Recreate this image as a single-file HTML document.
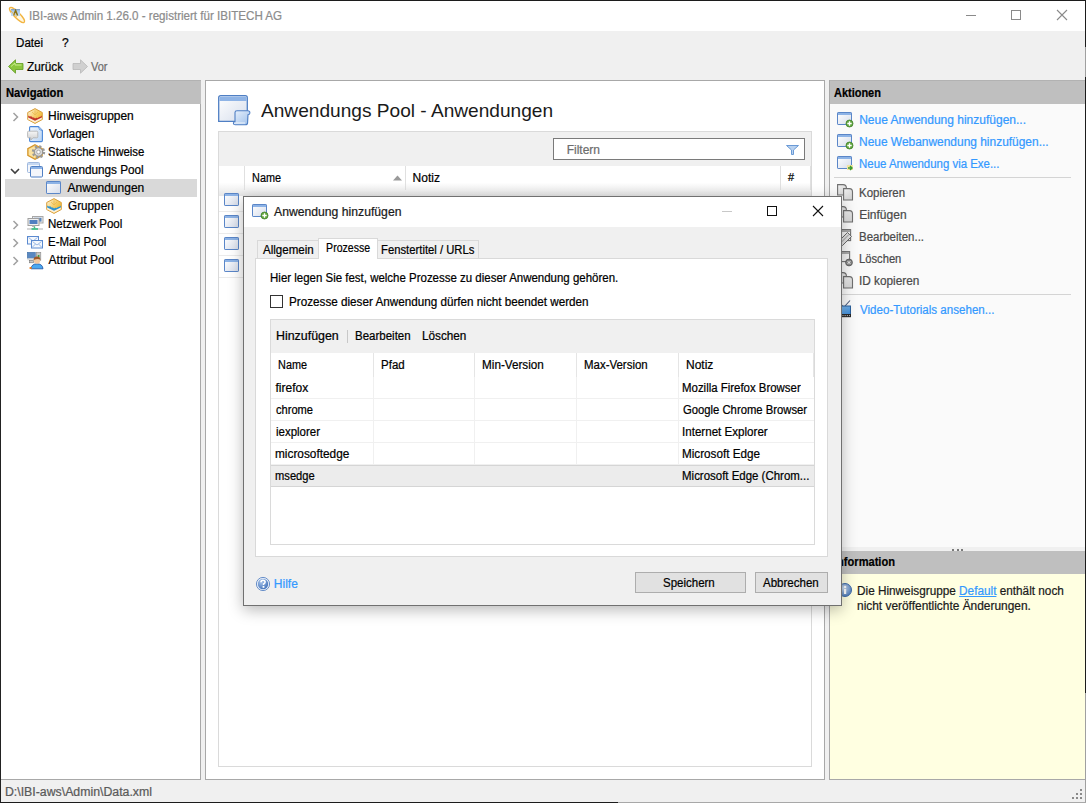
<!DOCTYPE html><html><head><meta charset="utf-8"><style>
html,body{margin:0;padding:0;}
body{width:1086px;height:803px;position:relative;overflow:hidden;background:#f0f0f0;font-family:"Liberation Sans",sans-serif;}
.t{position:absolute;white-space:nowrap;font-family:"Liberation Sans",sans-serif;-webkit-text-stroke:0.22px currentColor;}
svg{overflow:visible}
</style></head><body>
<div style="position:absolute;left:0px;top:0px;width:1086px;height:31px;background:#fff"></div>
<svg style="position:absolute;left:6px;top:4px" width="22" height="22" viewBox="0 0 22 22"><defs><linearGradient id="tg" x1="0" y1="0" x2="0" y2="1"><stop offset="0" stop-color="#7894b4"/><stop offset="0.25" stop-color="#a8c8ec"/><stop offset="1" stop-color="#c8e0fa"/></linearGradient></defs><ellipse cx="11" cy="11" rx="10.2" ry="2.9" transform="rotate(45 11 11)" fill="#fff6e0" stroke="#f2b440" stroke-width="1.3"/><rect x="5" y="5" width="9" height="7" fill="url(#tg)"/><path d="M7.6 11.5 L9.6 6.5 L11.6 11.5" fill="none" stroke="#8a7010" stroke-width="1.5"/><path d="M5 7.2 L10.5 12.7" stroke="#f2b440" stroke-width="1.3" stroke-dasharray="1 0.7"/></svg>
<div class="t" style="left:29.4px;top:10px;font-size:12px;line-height:12px;color:#8c8c8c;font-weight:400;transform:scaleX(0.9655);transform-origin:1px 0;">IBI-aws Admin 1.26.0 - registriert für IBITECH AG</div>
<div style="position:absolute;left:966px;top:15px;width:10px;height:1px;background:#8a8a8a"></div>
<div style="position:absolute;left:1011px;top:10px;width:10px;height:10px;border:1px solid #8a8a8a;box-sizing:border-box"></div>
<svg style="position:absolute;left:1057px;top:10px" width="10" height="10" viewBox="0 0 10 10"><path d="M0 0L10 10M10 0L0 10" stroke="#8a8a8a" stroke-width="1.1"/></svg>
<div class="t" style="left:15.600000000000001px;top:37px;font-size:12px;line-height:12px;color:#000;font-weight:400;transform:scaleX(0.9630);transform-origin:1px 0;">Datei</div>
<div class="t" style="left:62px;top:37px;font-size:12px;line-height:12px;color:#000;font-weight:400;">?</div>
<svg style="position:absolute;left:8px;top:59px" width="16" height="15" viewBox="0 0 16 15"><path d="M0.5 7.5 L7.5 0.8 V4.5 H15 V10.5 H7.5 V14.2 Z" fill="#8cc63f" stroke="#5f9a1e" stroke-width="0.8"/><path d="M3 7.5 L7 4 V6 H13.5" fill="none" stroke="#c8ec8a" stroke-width="1"/></svg>
<div class="t" style="left:27.3px;top:61px;font-size:12px;line-height:12px;color:#000;font-weight:400;transform:scaleX(0.9865);transform-origin:0px 0;">Zurück</div>
<svg style="position:absolute;left:72px;top:59px" width="16" height="15" viewBox="0 0 16 15"><path d="M15.5 7.5 L8.5 0.8 V4.5 H1 V10.5 H8.5 V14.2 Z" fill="#d0d0d0" stroke="#b8b8b8" stroke-width="0.8"/></svg>
<div class="t" style="left:91.2px;top:61px;font-size:12px;line-height:12px;color:#6d6d6d;font-weight:400;transform:scaleX(0.9167);transform-origin:0px 0;">Vor</div>
<div style="position:absolute;left:1px;top:80px;width:200px;height:24px;background:#bfbfbf;border-top:1px solid #b2b2b2;box-sizing:border-box"></div>
<div class="t" style="left:5.5px;top:87px;font-size:12px;line-height:12px;color:#000;font-weight:700;transform:scaleX(0.9344);transform-origin:0px 0;">Navigation</div>
<div style="position:absolute;left:1px;top:104px;width:199px;height:675px;background:#fff"></div>
<div style="position:absolute;left:200px;top:104px;width:1px;height:676px;background:#a8a8a8"></div>
<div style="position:absolute;left:1px;top:779px;width:200px;height:1px;background:#a8a8a8"></div>
<div style="position:absolute;left:5px;top:179px;width:192px;height:18px;background:#d9d9d9"></div>
<svg style="position:absolute;left:12px;top:112px" width="8" height="10" viewBox="0 0 8 10"><path d="M1.5 1 L5.5 5 L1.5 9" fill="none" stroke="#a0a0a0" stroke-width="1.5"/></svg>
<svg style="position:absolute;left:27px;top:108px" width="16" height="16" viewBox="0 0 16 16"><defs><linearGradient id="hxc2372a" x1="0" y1="0" x2="1" y2="0.6"><stop offset="0" stop-color="#fff4d8"/><stop offset="0.55" stop-color="#f6d070"/><stop offset="1" stop-color="#f0b830"/></linearGradient></defs><path d="M8 0.6 L15.3 4.5 V11.5 L8 15.4 L0.7 11.5 V4.5 Z" fill="url(#hxc2372a)" stroke="#d9a040" stroke-width="1"/><path d="M8 2.5 V7 M5 4 L8 7 L11 4" fill="none" stroke="#e8b850" stroke-width="0.7"/><path d="M1.2 9 L8 12.2 L14.8 9 V11.3 L8 14.8 L1.2 11.3 Z" fill="#fdf0d8"/><path d="M1.2 7.6 L2.8 8.6 L4.2 8.3 L5.6 9.6 L7 9.4 L8 10.4 L9.4 9.8 L10.8 10 L12 9 L13.4 8.8 L14.8 7.6 V9.6 L8 12.8 L1.2 9.6 Z" fill="#c2372a"/></svg>
<div class="t" style="left:47.6px;top:110px;font-size:12px;line-height:12px;color:#000;font-weight:400;transform:scaleX(0.9965);transform-origin:1px 0;">Hinweisgruppen</div>
<svg style="position:absolute;left:27px;top:126px" width="17" height="17" viewBox="0 0 17 17"><defs><linearGradient id="vg" x1="0" y1="0" x2="1" y2="1"><stop offset="0" stop-color="#f4f8fe"/><stop offset="1" stop-color="#b8d4f4"/></linearGradient><linearGradient id="vb" x1="0" y1="0" x2="0" y2="1"><stop offset="0" stop-color="#f6f6f6"/><stop offset="1" stop-color="#cfcfcf"/></linearGradient></defs><path d="M2.6 1.6 Q2.6 0.6 3.6 0.6 H11.5 L15.4 4.5 V14.6 Q15.4 15.6 14.4 15.6 H3.6 Q2.6 15.6 2.6 14.6 Z" fill="url(#vg)" stroke="#4a86d8" stroke-width="1.1"/><path d="M11.5 0.6 Q11.5 4.5 15.4 4.5" fill="#d8e8f8" stroke="#4a86d8" stroke-width="0.8"/><path d="M0.6 6.2 Q0.6 5.2 1.6 5.2 H9.8 Q10.8 5.2 10.8 6.2 V10.8 Q10.8 11.8 9.8 11.8 H6 L3.8 14 V11.8 H1.6 Q0.6 11.8 0.6 10.8 Z" fill="url(#vb)" stroke="#b4b4b4" stroke-width="0.9"/></svg>
<div class="t" style="left:48.6px;top:128px;font-size:12px;line-height:12px;color:#000;font-weight:400;transform:scaleX(0.9574);transform-origin:0px 0;">Vorlagen</div>
<svg style="position:absolute;left:27px;top:144px" width="17" height="16" viewBox="0 0 17 16"><path d="M8 0.8 L15.2 4.6 V11.4 L8 15.2 L0.8 11.4 V4.6 Z" fill="#f7d27a" stroke="#d4962e" stroke-width="1.2"/><path d="M8 2 L2 5 V11 L8 14 Z" fill="#fbe2a0"/><circle cx="11.5" cy="8" r="5.6" fill="none" stroke="#9a9a9a" stroke-width="2.2" stroke-dasharray="2.2 2.2"/><circle cx="11.5" cy="8" r="4.3" fill="#d8d8d8" stroke="#8a8a8a" stroke-width="1"/><circle cx="11.5" cy="8" r="1.8" fill="#fff" stroke="#9a9a9a" stroke-width="0.7"/></svg>
<div class="t" style="left:47.6px;top:146px;font-size:12px;line-height:12px;color:#000;font-weight:400;transform:scaleX(0.9500);transform-origin:1px 0;">Statische Hinweise</div>
<svg style="position:absolute;left:10px;top:168px" width="10" height="7" viewBox="0 0 10 7"><path d="M1 1 L5 5 L9 1" fill="none" stroke="#404040" stroke-width="1.6"/></svg>
<svg style="position:absolute;left:27px;top:162px" width="16" height="16" viewBox="0 0 16 16"><rect x="0.5" y="0.5" width="12" height="10" rx="1" fill="#f4f7fc" stroke="#9fb8de"/><rect x="1" y="1" width="11" height="2" fill="#c5d8f2"/><rect x="3.5" y="4.5" width="12" height="10.5" rx="1" fill="#f4f6fb" stroke="#4f7fc4"/><rect x="4" y="5" width="11" height="2" fill="#8db3e6"/></svg>
<div class="t" style="left:48.6px;top:164px;font-size:12px;line-height:12px;color:#000;font-weight:400;transform:scaleX(0.9792);transform-origin:0px 0;">Anwendungs Pool</div>
<svg style="position:absolute;left:46px;top:181px" width="18" height="17" viewBox="0 0 18 17"><defs><linearGradient id="wg46_181" x1="0" y1="0" x2="1" y2="1"><stop offset="0" stop-color="#ffffff"/><stop offset="1" stop-color="#d5dcea"/></linearGradient></defs><rect x="0.5" y="0.5" width="14" height="12" rx="0.6" fill="url(#wg46_181)" stroke="#5a86c8"/><rect x="1" y="1" width="13" height="2" fill="#8db3e6"/></svg>
<div class="t" style="left:67.5px;top:182px;font-size:12px;line-height:12px;color:#000;font-weight:400;transform:scaleX(1.0000);transform-origin:0px 0;">Anwendungen</div>
<svg style="position:absolute;left:46px;top:198px" width="16" height="16" viewBox="0 0 16 16"><defs><linearGradient id="hx2e93d1" x1="0" y1="0" x2="1" y2="0.6"><stop offset="0" stop-color="#fff4d8"/><stop offset="0.55" stop-color="#f6d070"/><stop offset="1" stop-color="#f0b830"/></linearGradient></defs><path d="M8 0.6 L15.3 4.5 V11.5 L8 15.4 L0.7 11.5 V4.5 Z" fill="url(#hx2e93d1)" stroke="#d9a040" stroke-width="1"/><path d="M8 2.5 V7 M5 4 L8 7 L11 4" fill="none" stroke="#e8b850" stroke-width="0.7"/><path d="M1.2 9 L8 12.2 L14.8 9 V11.3 L8 14.8 L1.2 11.3 Z" fill="#fdf0d8"/><path d="M1.2 7.6 L2.8 8.6 L4.2 8.3 L5.6 9.6 L7 9.4 L8 10.4 L9.4 9.8 L10.8 10 L12 9 L13.4 8.8 L14.8 7.6 V9.6 L8 12.8 L1.2 9.6 Z" fill="#2e93d1"/></svg>
<div class="t" style="left:67.5px;top:200px;font-size:12px;line-height:12px;color:#000;font-weight:400;transform:scaleX(0.9783);transform-origin:0px 0;">Gruppen</div>
<svg style="position:absolute;left:12px;top:220px" width="8" height="10" viewBox="0 0 8 10"><path d="M1.5 1 L5.5 5 L1.5 9" fill="none" stroke="#a0a0a0" stroke-width="1.5"/></svg>
<svg style="position:absolute;left:27px;top:216px" width="17" height="16" viewBox="0 0 17 16"><rect x="5.5" y="0.5" width="10.5" height="6.5" fill="#ececec" stroke="#a8a8a8"/><rect x="7" y="1.8" width="7.5" height="3.8" fill="#5a88c0"/><rect x="1" y="2.5" width="11" height="7" fill="#f0f0f0" stroke="#a0a0a0"/><rect x="2.5" y="4" width="8" height="4" fill="#4f7fc0"/><rect x="5" y="9.5" width="3" height="1.5" fill="#b8b8b8"/><path d="M0 13 H16" stroke="#cfcfcf" stroke-width="1.6"/><path d="M4.5 13 H11" stroke="#44c088" stroke-width="1.8"/><path d="M7.5 10.5 V13" stroke="#44c088" stroke-width="1.5"/></svg>
<div class="t" style="left:47.6px;top:218px;font-size:12px;line-height:12px;color:#000;font-weight:400;transform:scaleX(0.9605);transform-origin:1px 0;">Netzwerk Pool</div>
<svg style="position:absolute;left:12px;top:238px" width="8" height="10" viewBox="0 0 8 10"><path d="M1.5 1 L5.5 5 L1.5 9" fill="none" stroke="#a0a0a0" stroke-width="1.5"/></svg>
<svg style="position:absolute;left:27px;top:234px" width="17" height="16" viewBox="0 0 17 16"><rect x="0.5" y="2.5" width="11" height="7.5" fill="#f4f8fd" stroke="#5a8ad0"/><path d="M1.5 3.5 L6 7 L10.5 3.5" fill="none" stroke="#9ab8e4"/><rect x="4.5" y="6.5" width="11" height="7.5" fill="#f4f8fd" stroke="#5a8ad0"/><path d="M5.5 7.5 L10 11 L14.5 7.5 M5.5 13 L8.5 10 M14.5 13 L11.5 10" fill="none" stroke="#9ab8e4"/></svg>
<div class="t" style="left:47.6px;top:236px;font-size:12px;line-height:12px;color:#000;font-weight:400;transform:scaleX(0.9500);transform-origin:1px 0;">E-Mail Pool</div>
<svg style="position:absolute;left:12px;top:256px" width="8" height="10" viewBox="0 0 8 10"><path d="M1.5 1 L5.5 5 L1.5 9" fill="none" stroke="#a0a0a0" stroke-width="1.5"/></svg>
<svg style="position:absolute;left:27px;top:252px" width="17" height="17" viewBox="0 0 17 17"><rect x="0.3" y="0.3" width="8" height="6" fill="#5a88c0" stroke="#4070a8" stroke-width="0.6"/><rect x="0.3" y="6.3" width="8" height="2" fill="#dcdcdc"/><rect x="2.5" y="8.3" width="4" height="2.5" fill="#c8c8c8" stroke="#777" stroke-width="0.6"/><rect x="9.3" y="0.3" width="4.5" height="8" fill="#c8c8c8" stroke="#8a8a8a" stroke-width="0.6"/><rect x="10.8" y="3" width="1.6" height="2" fill="#40a040"/><path d="M4 16.8 Q4.5 11.8 10 11.8 Q15.5 11.8 16 16.8 Z" fill="#4aa8f0" stroke="#2050a0" stroke-width="0.8"/><circle cx="10" cy="8.6" r="3.2" fill="#f2c8a0"/><path d="M6.6 8 Q6.6 4.6 10 4.6 Q13.4 4.6 13.4 8 Q11.5 6.2 6.6 8 Z" fill="#a05a28"/><rect x="2.6" y="15" width="2" height="2" fill="#f08020"/></svg>
<div class="t" style="left:48.6px;top:254px;font-size:12px;line-height:12px;color:#000;font-weight:400;transform:scaleX(1.0000);transform-origin:0px 0;">Attribut Pool</div>
<div style="position:absolute;left:205px;top:80px;width:620px;height:700px;background:#fff;border:1px solid #a8a8a8;box-sizing:border-box"></div>
<svg style="position:absolute;left:218px;top:95px" width="33" height="31" viewBox="0 0 33 31"><defs><linearGradient id="bg1" x1="0" y1="0" x2="1" y2="1"><stop offset="0" stop-color="#fff"/><stop offset="1" stop-color="#d6deec"/></linearGradient><linearGradient id="bg2" x1="0" y1="0" x2="1" y2="1"><stop offset="0" stop-color="#e8f1fc"/><stop offset="1" stop-color="#9fc0ea"/></linearGradient></defs><path d="M0.7 2.7 Q0.7 0.7 2.7 0.7 H27.3 Q29.3 0.7 29.3 2.7 V26.3 H0.7 Z" fill="url(#bg1)" stroke="#4f7fc4" stroke-width="1.3"/><path d="M1.4 2.8 Q1.4 1.4 2.8 1.4 H27.2 Q28.6 1.4 28.6 2.8 V6 H1.4 Z" fill="#8fb4e6"/><path d="M17 17.5 Q17 15.7 19 15.7 H30 Q32.6 16.2 31.6 18.8 Q31 19.8 30 19.8 L29.6 27.6 Q29.5 29.8 27.4 29.8 H17.5 Q15 29.8 15.5 27.6 Q16.4 27 17 27 Z" fill="url(#bg2)" stroke="#4f7fc4" stroke-width="1.1"/><path d="M16 28 H27" stroke="#fff" stroke-width="0.8"/></svg>
<div class="t" style="left:261.4px;top:101px;font-size:19px;line-height:19px;color:#1a1a1a;font-weight:400;transform:scaleX(1.0055);transform-origin:0px 0;-webkit-text-stroke:0;">Anwendungs Pool - Anwendungen</div>
<div style="position:absolute;left:218px;top:131px;width:594px;height:636px;background:#fff;border:1px solid #dadada;box-sizing:border-box"></div>
<div style="position:absolute;left:219px;top:132px;width:592px;height:34px;background:#f0f0f0"></div>
<div style="position:absolute;left:553px;top:138px;width:252px;height:22px;background:#fff;border:1px solid #7a7a7a;box-sizing:border-box"></div>
<div class="t" style="left:566.7px;top:144px;font-size:12px;line-height:12px;color:#6d6d6d;font-weight:400;transform:scaleX(1.0000);transform-origin:1px 0;">Filtern</div>
<svg style="position:absolute;left:786px;top:145px" width="13" height="10" viewBox="0 0 13 10"><path d="M0.5 0.5 H12.5 L7.5 5 V9.5 H5.5 V5 Z" fill="#b9d2f0" stroke="#6a9ad6"/></svg>
<div style="position:absolute;left:219px;top:166px;width:592px;height:30px;background:linear-gradient(#fff 0%,#fff 55%,#e6e6e6 100%)"></div>
<div style="position:absolute;left:244px;top:166px;width:1px;height:24px;background:#e0e0e0"></div>
<div style="position:absolute;left:405px;top:166px;width:1px;height:24px;background:#e0e0e0"></div>
<div style="position:absolute;left:780px;top:166px;width:1px;height:24px;background:#e0e0e0"></div>
<div style="position:absolute;left:810px;top:166px;width:1px;height:24px;background:#e0e0e0"></div>
<div class="t" style="left:251.7px;top:172px;font-size:12px;line-height:12px;color:#000;font-weight:400;transform:scaleX(0.9032);transform-origin:1px 0;">Name</div>
<svg style="position:absolute;left:393px;top:175px" width="10" height="6" viewBox="0 0 10 6"><path d="M0 5.5 L4.5 0.5 L9 5.5 Z" fill="#9a9a9a"/></svg>
<div class="t" style="left:412.6px;top:172px;font-size:12px;line-height:12px;color:#000;font-weight:400;transform:scaleX(1.0000);transform-origin:1px 0;">Notiz</div>
<div class="t" style="left:788px;top:172px;font-size:11px;line-height:11px;color:#000;font-weight:400;">#</div>
<div style="position:absolute;left:219px;top:211px;width:25px;height:1px;background:#ebebeb"></div>
<svg style="position:absolute;left:224px;top:193px" width="18" height="17" viewBox="0 0 18 17"><defs><linearGradient id="wg224_193" x1="0" y1="0" x2="1" y2="1"><stop offset="0" stop-color="#ffffff"/><stop offset="1" stop-color="#d5dcea"/></linearGradient></defs><rect x="0.5" y="0.5" width="14" height="12" rx="0.6" fill="url(#wg224_193)" stroke="#5a86c8"/><rect x="1" y="1" width="13" height="2" fill="#8db3e6"/></svg>
<div style="position:absolute;left:219px;top:233px;width:25px;height:1px;background:#ebebeb"></div>
<svg style="position:absolute;left:224px;top:215px" width="18" height="17" viewBox="0 0 18 17"><defs><linearGradient id="wg224_215" x1="0" y1="0" x2="1" y2="1"><stop offset="0" stop-color="#ffffff"/><stop offset="1" stop-color="#d5dcea"/></linearGradient></defs><rect x="0.5" y="0.5" width="14" height="12" rx="0.6" fill="url(#wg224_215)" stroke="#5a86c8"/><rect x="1" y="1" width="13" height="2" fill="#8db3e6"/></svg>
<div style="position:absolute;left:219px;top:255px;width:25px;height:1px;background:#ebebeb"></div>
<svg style="position:absolute;left:224px;top:237px" width="18" height="17" viewBox="0 0 18 17"><defs><linearGradient id="wg224_237" x1="0" y1="0" x2="1" y2="1"><stop offset="0" stop-color="#ffffff"/><stop offset="1" stop-color="#d5dcea"/></linearGradient></defs><rect x="0.5" y="0.5" width="14" height="12" rx="0.6" fill="url(#wg224_237)" stroke="#5a86c8"/><rect x="1" y="1" width="13" height="2" fill="#8db3e6"/></svg>
<div style="position:absolute;left:219px;top:277px;width:25px;height:1px;background:#ebebeb"></div>
<svg style="position:absolute;left:224px;top:259px" width="18" height="17" viewBox="0 0 18 17"><defs><linearGradient id="wg224_259" x1="0" y1="0" x2="1" y2="1"><stop offset="0" stop-color="#ffffff"/><stop offset="1" stop-color="#d5dcea"/></linearGradient></defs><rect x="0.5" y="0.5" width="14" height="12" rx="0.6" fill="url(#wg224_259)" stroke="#5a86c8"/><rect x="1" y="1" width="13" height="2" fill="#8db3e6"/></svg>
<div style="position:absolute;left:829px;top:80px;width:1px;height:700px;background:#a8a8a8"></div>
<div style="position:absolute;left:830px;top:80px;width:255px;height:24px;background:#bfbfbf;border-top:1px solid #b2b2b2;box-sizing:border-box"></div>
<div class="t" style="left:833.7px;top:87px;font-size:12px;line-height:12px;color:#000;font-weight:700;transform:scaleX(0.9137);transform-origin:0px 0;">Aktionen</div>
<div style="position:absolute;left:830px;top:104px;width:255px;height:443px;background:#fafafa"></div>
<svg style="position:absolute;left:837px;top:112px" width="18" height="17" viewBox="0 0 18 17"><defs><linearGradient id="wg837_112" x1="0" y1="0" x2="1" y2="1"><stop offset="0" stop-color="#ffffff"/><stop offset="1" stop-color="#d5dcea"/></linearGradient></defs><rect x="0.5" y="0.5" width="14" height="12" rx="0.6" fill="url(#wg837_112)" stroke="#5a86c8"/><rect x="1" y="1" width="13" height="2" fill="#8db3e6"/><circle cx="12.5" cy="11.5" r="3.5" fill="#62a83e" stroke="#3f7f2a" stroke-width="0.8"/><path d="M12.5 9.3v4.4M10.3 11.5h4.4" stroke="#fff" stroke-width="1.3"/></svg>
<div class="t" style="left:859.2px;top:114px;font-size:12px;line-height:12px;color:#3399ff;font-weight:400;transform:scaleX(1.0000);transform-origin:1px 0;">Neue Anwendung hinzufügen...</div>
<svg style="position:absolute;left:837px;top:134px" width="18" height="17" viewBox="0 0 18 17"><defs><linearGradient id="wg837_134" x1="0" y1="0" x2="1" y2="1"><stop offset="0" stop-color="#ffffff"/><stop offset="1" stop-color="#d5dcea"/></linearGradient></defs><rect x="0.5" y="0.5" width="14" height="12" rx="0.6" fill="url(#wg837_134)" stroke="#5a86c8"/><rect x="1" y="1" width="13" height="2" fill="#8db3e6"/><circle cx="12.5" cy="11.5" r="3.5" fill="#62a83e" stroke="#3f7f2a" stroke-width="0.8"/><path d="M12.5 9.3v4.4M10.3 11.5h4.4" stroke="#fff" stroke-width="1.3"/></svg>
<div class="t" style="left:859.2px;top:136px;font-size:12px;line-height:12px;color:#3399ff;font-weight:400;transform:scaleX(0.9947);transform-origin:1px 0;">Neue Webanwendung hinzufügen...</div>
<svg style="position:absolute;left:837px;top:156px" width="18" height="17" viewBox="0 0 18 17"><defs><linearGradient id="wg837_156" x1="0" y1="0" x2="1" y2="1"><stop offset="0" stop-color="#ffffff"/><stop offset="1" stop-color="#d5dcea"/></linearGradient></defs><rect x="0.5" y="0.5" width="14" height="12" rx="0.6" fill="url(#wg837_156)" stroke="#5a86c8"/><rect x="1" y="1" width="13" height="2" fill="#8db3e6"/><rect x="10" y="9" width="6" height="5" fill="#f3e3a0"/><path d="M11 12h4m-2 -2l2 2l-2 2" stroke="#3a9a30" stroke-width="1.4" fill="none"/></svg>
<div class="t" style="left:859.2px;top:158px;font-size:12px;line-height:12px;color:#3399ff;font-weight:400;transform:scaleX(0.9521);transform-origin:1px 0;">Neue Anwendung via Exe...</div>
<div style="position:absolute;left:834px;top:177px;width:237px;height:1px;background:#d4d4d4"></div>
<svg style="position:absolute;left:837px;top:184px" width="17" height="17" viewBox="0 0 17 17"><defs><linearGradient id="pg" x1="0" y1="0" x2="1" y2="1"><stop offset="0" stop-color="#f2f2f2"/><stop offset="1" stop-color="#d0d0d0"/></linearGradient></defs><path d="M0.6 0.6 H6 Q9.4 0.6 9.4 4 V11 H0.6 Z" fill="url(#pg)" stroke="#707070" stroke-width="1.1"/><path d="M6.6 4.6 H12.5 Q15.5 4.6 15.5 8 V16 H6.6 Z" fill="url(#pg)" stroke="#707070" stroke-width="1.1"/></svg>
<div class="t" style="left:859.2px;top:187px;font-size:12px;line-height:12px;color:#4a4a4a;font-weight:400;transform:scaleX(0.9574);transform-origin:1px 0;">Kopieren</div>
<svg style="position:absolute;left:837px;top:206px" width="17" height="17" viewBox="0 0 17 17"><defs><linearGradient id="pg" x1="0" y1="0" x2="1" y2="1"><stop offset="0" stop-color="#f2f2f2"/><stop offset="1" stop-color="#d0d0d0"/></linearGradient></defs><path d="M0.6 0.6 H6 Q9.4 0.6 9.4 4 V11 H0.6 Z" fill="url(#pg)" stroke="#707070" stroke-width="1.1"/><path d="M6.6 4.6 H12.5 Q15.5 4.6 15.5 8 V16 H6.6 Z" fill="url(#pg)" stroke="#707070" stroke-width="1.1"/></svg>
<div class="t" style="left:859.2px;top:209px;font-size:12px;line-height:12px;color:#4a4a4a;font-weight:400;transform:scaleX(1.0000);transform-origin:1px 0;">Einfügen</div>
<svg style="position:absolute;left:837px;top:229px" width="17" height="17" viewBox="0 0 17 17"><rect x="0.6" y="0.6" width="13" height="11" fill="#f2f2f2" stroke="#707070" stroke-width="1.1"/><rect x="1" y="1" width="12.2" height="2" fill="#a8a8a8"/><path d="M1.5 12.5 L10.5 3.5 L14.5 7.5 L5.5 16.5 L1 17 Z" fill="#e0e0e0" stroke="#6a6a6a" stroke-width="1"/><path d="M3 14.5 L12 5.5" stroke="#9a9a9a" stroke-width="1"/></svg>
<div class="t" style="left:859.2px;top:231px;font-size:12px;line-height:12px;color:#4a4a4a;font-weight:400;transform:scaleX(0.9545);transform-origin:1px 0;">Bearbeiten...</div>
<svg style="position:absolute;left:837px;top:251px" width="17" height="17" viewBox="0 0 17 17"><rect x="0.6" y="0.6" width="12" height="10" fill="#f2f2f2" stroke="#707070" stroke-width="1.1"/><rect x="1" y="1" width="11.2" height="2" fill="#a8a8a8"/><circle cx="12" cy="11.5" r="3.4" fill="#8a8a8a" stroke="#5a5a5a" stroke-width="0.9"/><path d="M10.7 10.2l2.6 2.6m0-2.6l-2.6 2.6" stroke="#fff" stroke-width="1"/></svg>
<div class="t" style="left:859.2px;top:253px;font-size:12px;line-height:12px;color:#4a4a4a;font-weight:400;transform:scaleX(0.9318);transform-origin:1px 0;">Löschen</div>
<svg style="position:absolute;left:837px;top:272px" width="17" height="17" viewBox="0 0 17 17"><defs><linearGradient id="pg" x1="0" y1="0" x2="1" y2="1"><stop offset="0" stop-color="#f2f2f2"/><stop offset="1" stop-color="#d0d0d0"/></linearGradient></defs><path d="M0.6 0.6 H6 Q9.4 0.6 9.4 4 V11 H0.6 Z" fill="url(#pg)" stroke="#707070" stroke-width="1.1"/><path d="M6.6 4.6 H12.5 Q15.5 4.6 15.5 8 V16 H6.6 Z" fill="url(#pg)" stroke="#707070" stroke-width="1.1"/></svg>
<div class="t" style="left:859.2px;top:275px;font-size:12px;line-height:12px;color:#4a4a4a;font-weight:400;transform:scaleX(0.9833);transform-origin:1px 0;">ID kopieren</div>
<div style="position:absolute;left:834px;top:294px;width:237px;height:1px;background:#d4d4d4"></div>
<svg style="position:absolute;left:837px;top:300px" width="16" height="18" viewBox="0 0 16 18"><defs><linearGradient id="tvg" x1="0" y1="0" x2="1" y2="1"><stop offset="0" stop-color="#8cc4f4"/><stop offset="1" stop-color="#3a8ad8"/></linearGradient></defs><path d="M1 1.5 L5.5 6 M13 0.5 L8 6" stroke="#4a5a7a" stroke-width="1.1"/><rect x="0.5" y="6" width="13" height="8.5" fill="url(#tvg)" stroke="#2c5f9a"/><rect x="0" y="14" width="14" height="3.2" fill="#2a2a2a"/><path d="M1 15.6h12" stroke="#c8c8c8" stroke-width="0.9" stroke-dasharray="1.2 1"/></svg>
<div class="t" style="left:860.2px;top:304px;font-size:12px;line-height:12px;color:#3399ff;font-weight:400;transform:scaleX(0.9640);transform-origin:0px 0;">Video-Tutorials ansehen...</div>
<div style="position:absolute;left:830px;top:547px;width:255px;height:4px;background:#f0f0f0"></div>
<div style="position:absolute;left:952px;top:549px;width:2px;height:2px;background:#7a7a7a"></div>
<div style="position:absolute;left:957px;top:549px;width:2px;height:2px;background:#7a7a7a"></div>
<div style="position:absolute;left:961px;top:549px;width:2px;height:2px;background:#7a7a7a"></div>
<div style="position:absolute;left:830px;top:551px;width:255px;height:23px;background:#bfbfbf"></div>
<div class="t" style="left:833.7px;top:556px;font-size:12px;line-height:12px;color:#000;font-weight:700;transform:scaleX(0.9242);transform-origin:0px 0;">Information</div>
<div style="position:absolute;left:830px;top:574px;width:255px;height:205px;background:#ffffe1"></div>
<div style="position:absolute;left:829px;top:779px;width:256px;height:1px;background:#a8a8a8"></div>
<svg style="position:absolute;left:838px;top:583px" width="14" height="14" viewBox="0 0 14 14"><defs><radialGradient id="ig" cx="0.4" cy="0.35" r="0.7"><stop offset="0" stop-color="#c8daf0"/><stop offset="1" stop-color="#4a78b8"/></radialGradient></defs><circle cx="7" cy="7" r="6.5" fill="url(#ig)" stroke="#3f6aa8"/><rect x="6" y="6" width="2.2" height="5" fill="#fff"/><circle cx="7.1" cy="4" r="1.2" fill="#fff"/></svg>
<div class="t" style="left:857px;top:585px;font-size:12px;line-height:12px;color:#1a1a1a;font-weight:400;transform:scaleX(0.9810);transform-origin:1px 0;">Die Hinweisgruppe <span style="color:#3399ff;text-decoration:underline">Default</span> enthält noch</div>
<div class="t" style="left:857px;top:600px;font-size:12px;line-height:12px;color:#1a1a1a;font-weight:400;transform:scaleX(0.9920);transform-origin:1px 0;">nicht veröffentlichte Änderungen.</div>
<div style="position:absolute;left:1px;top:780px;width:1084px;height:22px;background:#f0f0f0"></div>
<div class="t" style="left:4.8px;top:786px;font-size:12px;line-height:12px;color:#5a5a5a;font-weight:400;transform:scaleX(1.0254);transform-origin:1px 0;">D:\IBI-aws\Admin\Data.xml</div>
<div style="position:absolute;left:1080px;top:789px;width:2px;height:2px;background:#8a8a8a"></div>
<div style="position:absolute;left:1076px;top:793px;width:2px;height:2px;background:#8a8a8a"></div>
<div style="position:absolute;left:1080px;top:793px;width:2px;height:2px;background:#8a8a8a"></div>
<div style="position:absolute;left:1072px;top:797px;width:2px;height:2px;background:#8a8a8a"></div>
<div style="position:absolute;left:1076px;top:797px;width:2px;height:2px;background:#8a8a8a"></div>
<div style="position:absolute;left:1080px;top:797px;width:2px;height:2px;background:#8a8a8a"></div>
<div style="position:absolute;left:243px;top:196px;width:599px;height:410px;box-shadow:0 4px 14px rgba(0,0,0,0.28)"></div>
<div style="position:absolute;left:243px;top:196px;width:599px;height:410px;background:#f0f0f0;border:1px solid #707070;box-sizing:border-box"></div>
<div style="position:absolute;left:244px;top:197px;width:597px;height:30px;background:#fff"></div>
<svg style="position:absolute;left:252px;top:204px" width="18" height="17" viewBox="0 0 18 17"><defs><linearGradient id="wg252_204" x1="0" y1="0" x2="1" y2="1"><stop offset="0" stop-color="#ffffff"/><stop offset="1" stop-color="#d5dcea"/></linearGradient></defs><rect x="0.5" y="0.5" width="14" height="12" rx="0.6" fill="url(#wg252_204)" stroke="#5a86c8"/><rect x="1" y="1" width="13" height="2" fill="#8db3e6"/><circle cx="12.5" cy="11.5" r="3.5" fill="#62a83e" stroke="#3f7f2a" stroke-width="0.8"/><path d="M12.5 9.3v4.4M10.3 11.5h4.4" stroke="#fff" stroke-width="1.3"/></svg>
<div class="t" style="left:273.5px;top:206px;font-size:12px;line-height:12px;color:#1a1a1a;font-weight:400;transform:scaleX(1.0160);transform-origin:0px 0;">Anwendung hinzufügen</div>
<div style="position:absolute;left:722px;top:211px;width:10px;height:1px;background:#c8c8c8"></div>
<div style="position:absolute;left:767px;top:206px;width:10px;height:10px;border:1px solid #111;box-sizing:border-box"></div>
<svg style="position:absolute;left:813px;top:206px" width="10" height="10" viewBox="0 0 10 10"><path d="M0 0L10 10M10 0L0 10" stroke="#111" stroke-width="1.1"/></svg>
<div style="position:absolute;left:255px;top:258px;width:573px;height:299px;background:#fff;border:1px solid #d9d9d9;box-sizing:border-box"></div>
<div style="position:absolute;left:257px;top:240px;width:62px;height:19px;background:#f0f0f0;border:1px solid #d9d9d9;box-sizing:border-box"></div>
<div style="position:absolute;left:377px;top:240px;width:102px;height:19px;background:#f0f0f0;border:1px solid #d9d9d9;box-sizing:border-box"></div>
<div style="position:absolute;left:318px;top:238px;width:60px;height:21px;background:#fff;border:1px solid #d9d9d9;border-bottom:none;box-sizing:border-box"></div>
<div class="t" style="left:263.4px;top:244px;font-size:12px;line-height:12px;color:#000;font-weight:400;transform:scaleX(0.9615);transform-origin:0px 0;">Allgemein</div>
<div class="t" style="left:325.5px;top:242px;font-size:12px;line-height:12px;color:#000;font-weight:400;transform:scaleX(0.8776);transform-origin:1px 0;">Prozesse</div>
<div class="t" style="left:381.2px;top:244px;font-size:12px;line-height:12px;color:#000;font-weight:400;transform:scaleX(0.9388);transform-origin:1px 0;">Fenstertitel / URLs</div>
<div class="t" style="left:269.6px;top:272px;font-size:12px;line-height:12px;color:#000;font-weight:400;transform:scaleX(0.9559);transform-origin:1px 0;">Hier legen Sie fest, welche Prozesse zu dieser Anwendung gehören.</div>
<div style="position:absolute;left:270px;top:295px;width:13px;height:13px;border:1px solid #333;box-sizing:border-box;background:#fff"></div>
<div class="t" style="left:288.8px;top:296px;font-size:12px;line-height:12px;color:#000;font-weight:400;transform:scaleX(0.9739);transform-origin:1px 0;">Prozesse dieser Anwendung dürfen nicht beendet werden</div>
<div style="position:absolute;left:270px;top:319px;width:545px;height:226px;background:#fff;border:1px solid #dadada;box-sizing:border-box"></div>
<div style="position:absolute;left:271px;top:320px;width:543px;height:33px;background:#f0f0f0"></div>
<div class="t" style="left:275.6px;top:330px;font-size:12px;line-height:12px;color:#000;font-weight:400;transform:scaleX(1.0339);transform-origin:1px 0;">Hinzufügen</div>
<div style="position:absolute;left:347px;top:330px;width:1px;height:13px;background:#c8c8c8"></div>
<div class="t" style="left:354.5px;top:330px;font-size:12px;line-height:12px;color:#000;font-weight:400;transform:scaleX(0.9579);transform-origin:1px 0;">Bearbeiten</div>
<div class="t" style="left:421.5px;top:330px;font-size:12px;line-height:12px;color:#000;font-weight:400;transform:scaleX(0.9773);transform-origin:1px 0;">Löschen</div>
<div style="position:absolute;left:373px;top:353px;width:1px;height:24px;background:#e5e5e5"></div>
<div style="position:absolute;left:474px;top:353px;width:1px;height:24px;background:#e5e5e5"></div>
<div style="position:absolute;left:576px;top:353px;width:1px;height:24px;background:#e5e5e5"></div>
<div style="position:absolute;left:678px;top:353px;width:1px;height:24px;background:#e5e5e5"></div>
<div style="position:absolute;left:813px;top:353px;width:1px;height:24px;background:#e5e5e5"></div>
<div class="t" style="left:277.7px;top:359px;font-size:12px;line-height:12px;color:#000;font-weight:400;transform:scaleX(0.9032);transform-origin:1px 0;">Name</div>
<div class="t" style="left:380.6px;top:359px;font-size:12px;line-height:12px;color:#000;font-weight:400;transform:scaleX(0.9565);transform-origin:1px 0;">Pfad</div>
<div class="t" style="left:481.8px;top:359px;font-size:12px;line-height:12px;color:#000;font-weight:400;transform:scaleX(0.9758);transform-origin:1px 0;">Min-Version</div>
<div class="t" style="left:583.6px;top:359px;font-size:12px;line-height:12px;color:#000;font-weight:400;transform:scaleX(0.9538);transform-origin:1px 0;">Max-Version</div>
<div class="t" style="left:686px;top:359px;font-size:12px;line-height:12px;color:#000;font-weight:400;transform:scaleX(1.0000);transform-origin:1px 0;">Notiz</div>
<div style="position:absolute;left:271px;top:398px;width:543px;height:1px;background:#f0f0f0"></div>
<div style="position:absolute;left:373px;top:377px;width:1px;height:22px;background:#f0f0f0"></div>
<div style="position:absolute;left:474px;top:377px;width:1px;height:22px;background:#f0f0f0"></div>
<div style="position:absolute;left:576px;top:377px;width:1px;height:22px;background:#f0f0f0"></div>
<div style="position:absolute;left:678px;top:377px;width:1px;height:22px;background:#f0f0f0"></div>
<div class="t" style="left:275.5px;top:382px;font-size:12px;line-height:12px;color:#000;font-weight:400;transform:scaleX(1.0000);transform-origin:0px 0;">firefox</div>
<div class="t" style="left:681.6px;top:382px;font-size:12px;line-height:12px;color:#000;font-weight:400;transform:scaleX(0.9516);transform-origin:1px 0;">Mozilla Firefox Browser</div>
<div style="position:absolute;left:271px;top:420px;width:543px;height:1px;background:#f0f0f0"></div>
<div style="position:absolute;left:373px;top:399px;width:1px;height:22px;background:#f0f0f0"></div>
<div style="position:absolute;left:474px;top:399px;width:1px;height:22px;background:#f0f0f0"></div>
<div style="position:absolute;left:576px;top:399px;width:1px;height:22px;background:#f0f0f0"></div>
<div style="position:absolute;left:678px;top:399px;width:1px;height:22px;background:#f0f0f0"></div>
<div class="t" style="left:275.5px;top:404px;font-size:12px;line-height:12px;color:#000;font-weight:400;transform:scaleX(0.9250);transform-origin:0px 0;">chrome</div>
<div class="t" style="left:682.6px;top:404px;font-size:12px;line-height:12px;color:#000;font-weight:400;transform:scaleX(0.9394);transform-origin:0px 0;">Google Chrome Browser</div>
<div style="position:absolute;left:271px;top:442px;width:543px;height:1px;background:#f0f0f0"></div>
<div style="position:absolute;left:373px;top:421px;width:1px;height:22px;background:#f0f0f0"></div>
<div style="position:absolute;left:474px;top:421px;width:1px;height:22px;background:#f0f0f0"></div>
<div style="position:absolute;left:576px;top:421px;width:1px;height:22px;background:#f0f0f0"></div>
<div style="position:absolute;left:678px;top:421px;width:1px;height:22px;background:#f0f0f0"></div>
<div class="t" style="left:275.5px;top:426px;font-size:12px;line-height:12px;color:#000;font-weight:400;transform:scaleX(0.9565);transform-origin:0px 0;">iexplorer</div>
<div class="t" style="left:681.6px;top:426px;font-size:12px;line-height:12px;color:#000;font-weight:400;transform:scaleX(0.9659);transform-origin:1px 0;">Internet Explorer</div>
<div style="position:absolute;left:271px;top:464px;width:543px;height:1px;background:#f0f0f0"></div>
<div style="position:absolute;left:373px;top:443px;width:1px;height:22px;background:#f0f0f0"></div>
<div style="position:absolute;left:474px;top:443px;width:1px;height:22px;background:#f0f0f0"></div>
<div style="position:absolute;left:576px;top:443px;width:1px;height:22px;background:#f0f0f0"></div>
<div style="position:absolute;left:678px;top:443px;width:1px;height:22px;background:#f0f0f0"></div>
<div class="t" style="left:274.5px;top:448px;font-size:12px;line-height:12px;color:#000;font-weight:400;transform:scaleX(0.9865);transform-origin:1px 0;">microsoftedge</div>
<div class="t" style="left:681.6px;top:448px;font-size:12px;line-height:12px;color:#000;font-weight:400;transform:scaleX(0.9747);transform-origin:1px 0;">Microsoft Edge</div>
<div style="position:absolute;left:271px;top:465px;width:543px;height:22px;background:#ececec;border-top:1px solid #d5d5d5;border-bottom:1px solid #d5d5d5;box-sizing:border-box"></div>
<div class="t" style="left:274.5px;top:470px;font-size:12px;line-height:12px;color:#000;font-weight:400;transform:scaleX(0.9286);transform-origin:1px 0;">msedge</div>
<div class="t" style="left:681.6px;top:470px;font-size:12px;line-height:12px;color:#000;font-weight:400;transform:scaleX(0.9545);transform-origin:1px 0;">Microsoft Edge (Chrom...</div>
<svg style="position:absolute;left:256px;top:577px" width="14" height="14" viewBox="0 0 14 14"><defs><radialGradient id="hg" cx="0.35" cy="0.3" r="0.8"><stop offset="0" stop-color="#a8c4ea"/><stop offset="1" stop-color="#3f6fb8"/></radialGradient></defs><circle cx="7" cy="7" r="6.6" fill="#e8f0fa" stroke="#5a84c4" stroke-width="0.9"/><circle cx="7" cy="7" r="5.2" fill="url(#hg)"/><path d="M5 5.3 Q5 3.3 7 3.3 Q9.1 3.3 9.1 5.1 Q9.1 6.4 7.6 7 V8" fill="none" stroke="#fff" stroke-width="1.6"/><rect x="6.6" y="9" width="1.8" height="1.8" fill="#fff"/></svg>
<div class="t" style="left:273.8px;top:578px;font-size:12px;line-height:12px;color:#3399ff;font-weight:400;transform:scaleX(1.0000);transform-origin:1px 0;">Hilfe</div>
<div style="position:absolute;left:635px;top:572px;width:111px;height:21px;background:#e1e1e1;border:1px solid #adadad;box-sizing:border-box"></div>
<div style="position:absolute;left:755px;top:572px;width:73px;height:21px;background:#e1e1e1;border:1px solid #adadad;box-sizing:border-box"></div>
<div class="t" style="left:663.2px;top:577px;font-size:12px;line-height:12px;color:#000;font-weight:400;transform:scaleX(0.9566);transform-origin:1px 0;">Speichern</div>
<div class="t" style="left:763.3px;top:577px;font-size:12px;line-height:12px;color:#000;font-weight:400;transform:scaleX(0.9603);transform-origin:0px 0;">Abbrechen</div>
<div style="position:absolute;left:0px;top:0px;width:1086px;height:1px;background:#1c1c1c"></div>
<div style="position:absolute;left:0px;top:0px;width:1px;height:803px;background:#222"></div>
<div style="position:absolute;left:1085px;top:0px;width:1px;height:47px;background:#1c1c1c"></div>
<div style="position:absolute;left:1085px;top:47px;width:1px;height:30px;background:#a0a0a0"></div>
<div style="position:absolute;left:1085px;top:77px;width:1px;height:616px;background:#1c1c1c"></div>
<div style="position:absolute;left:1085px;top:693px;width:1px;height:110px;background:#a0a0a0"></div>
<div style="position:absolute;left:0px;top:802px;width:618px;height:1px;background:#1c1c1c"></div>
<div style="position:absolute;left:618px;top:802px;width:468px;height:1px;background:#a8a8a8"></div>
</body></html>
